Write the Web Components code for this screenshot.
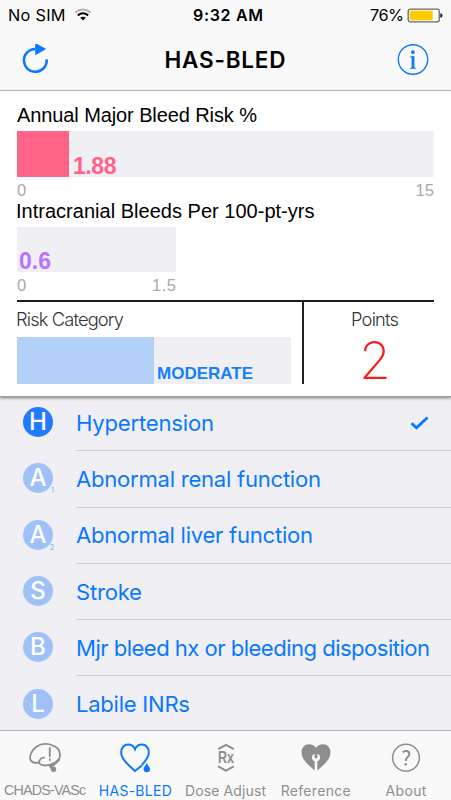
<!DOCTYPE html>
<html lang="en">
<head>
<meta charset="utf-8">
<title>HAS-BLED</title>
<style>
  html, body { margin: 0; height: 100%; background: #efeff4; }
  body { overflow: hidden; }
</style>
</head>
<body>
<bleed-app></bleed-app>

<script>
const define = (name, html, setup) => customElements.define(name, class extends HTMLElement {
  connectedCallback() {
    if (this.shadowRoot) return;
    const t = document.createElement('template');
    t.innerHTML = html;
    this.attachShadow({ mode: 'open' }).append(t.content.cloneNode(true));
    if (setup) setup(this, this.shadowRoot);
  }
});

/* Single line of text tracked so that it spans the width in its "span" attribute. */
define('ui-text', `
  <style>
    :host { display: block; white-space: nowrap; flex: none; }
    span { display: inline-block; }
  </style>
  <span><slot></slot></span>`, (el, root) => {
  const want = parseFloat(el.getAttribute('span'));
  if (!want) return;
  const s = root.querySelector('span');
  const text = root.querySelector('slot').assignedNodes({ flatten: true }).map(n => n.textContent).join('');
  const gap = (want - s.getBoundingClientRect().width) / (text.length - 1);
  s.style.letterSpacing = gap + 'px';
  s.style.marginRight = -gap + 'px';
});

define('status-bar', `
  <style>
    :host { display: grid; grid-template-columns: 1fr auto 1fr; height: 30px;
      font: 400 16.3px/30px Inter, sans-serif; color: #000; padding: 0 8px 0 8px; }
    .l, .r { display: flex; align-items: center; }
    .r { justify-content: flex-end; gap: 3px; }
    .l { gap: 8px; }
    .t { font-weight: 600; font-size: 16px; padding-left: 5px; }
    svg { display: block; }
  </style>
  <div class="l"><ui-text span="57.5">No SIM</ui-text>
    <svg width="18" height="14" viewBox="0 0 18 14" fill="none" stroke-width="2">
      <path d="M1.2 4.6Q9-1.6 16.8 4.6" stroke="#b5b5b5"/><path d="M3.8 7.4Q9 3.2 14.2 7.4" stroke="#000"/>
      <path d="M6.2 9.8Q9 7.8 11.8 9.8L9 12.6Z" fill="#000"/></svg></div>
  <ui-text class="t" span="70">9:32 AM</ui-text>
  <div class="r"><ui-text span="34">76%</ui-text>
    <svg width="36" height="15" viewBox="0 0 36 15">
      <rect x="1.2" y="1.2" width="31" height="12.6" rx="2" fill="#fff" stroke="#666" stroke-width="1.3"/>
      <rect x="2.7" y="2.7" width="23" height="9.6" fill="#fc0"/>
      <path d="M33.3 5.3Q35.5 5.3 35.5 7.5T33.3 9.7Z" fill="#222"/></svg></div>`);

define('nav-bar', `
  <style>
    :host { display: flex; align-items: center; justify-content: space-between; height: 61px;
      padding: 0 22px; border-bottom: 1px solid #bdbdc0; box-sizing: border-box; }
    ui-text { font: 600 22.5px/60px Inter, sans-serif; color: #000; padding-left: 3px; }
    svg { display: block; flex: none; }
  </style>
  <svg width="28" height="32" viewBox="0 0 28 32"><path d="M24.7 15.4A11.4 11.4 0 1 1 13.3 5" fill="none" stroke="#0a78ff" stroke-width="2.5"/><path d="M13.2 -1V11.2L24.2 4.9Z" fill="#0a78ff"/></svg>
  <ui-text span="121"><slot></slot></ui-text>
  <svg width="32" height="32" viewBox="0 0 32 32" fill="#0a78ff"><circle cx="16" cy="15.5" r="14.7" fill="none" stroke="#0a78ff" stroke-width="1.4"/>
    <circle cx="15.9" cy="8.2" r="1.9"/><path d="M12.9 12.5L17.4 12V23Q17.4 23.9 19.1 24.1V24.8H12.8V24.1Q14.6 23.9 14.6 23V14.3Q14.6 13.3 12.9 13.2Z"/></svg>`);

/* Horizontal meter: filled part, then the value at the foot of the track. */
define('risk-meter', `
  <style>
    :host { display: flex; align-items: flex-end; background: #efeff4; box-sizing: border-box; }
    i { align-self: stretch; width: var(--fill, 0px); background: var(--bar); }
    div { color: var(--ink); font: var(--face); padding-left: var(--pad, 3px); }
  </style>
  <i></i><div><slot></slot></div>`);

define('score-card', `
  <style>
    :host { display: block; box-sizing: border-box; height: 306px; padding: 8px 17px 0; background: #fff;
      border-bottom: 1px solid #999da0; box-shadow: 0 1px 3px #777; position: relative;
      font-family: "Liberation Sans", Arial, sans-serif; color: #000; }
    .h { font-size: 20px; line-height: 32px; }
    .scale { display: flex; justify-content: space-between; font-size: 16.6px; line-height: 27px; height: 18px; color: #a9a9a9; }
    .short { width: 159px; }
    .last { height: 28px; line-height: 28px; }
    .foot { display: flex; border-top: 2px solid #1b1e18; height: 82px; }
    .cat { width: 285px; border-right: 2px solid #222; }
    .thin { font: 300 18.3px/35px Inter, sans-serif; color: #333; margin-left: -1px; }
    .pts { flex: 1; display: flex; flex-direction: column; align-items: center; padding-left: 12px; }
    .pts .thin { margin: 0; }
    .two { font: 200 51.5px/46px Inter, sans-serif; color: #ff1a1a; }
  </style>
  <ui-text class="h" span="240">Annual Major Bleed Risk %</ui-text>
  <risk-meter style="height:46px;--fill:52px;--pad:4px;--bar:#ff6488;--ink:#ff6488;--face:bold 23px/22px 'Liberation Sans',sans-serif"><ui-text span="43.5">1.88</ui-text></risk-meter>
  <div class="scale"><span>0</span><span>15</span></div>
  <ui-text class="h" style="margin-left:-1px" span="298.5">Intracranial Bleeds Per 100-pt-yrs</ui-text>
  <risk-meter class="short" style="height:45px;--pad:2px;--ink:#b974ff;--face:bold 23px/22px 'Liberation Sans',sans-serif"><ui-text span="32">0.6</ui-text></risk-meter>
  <div class="scale last short"><span>0</span><ui-text span="24">1.5</ui-text></div>
  <div class="foot">
    <div class="cat"><ui-text class="thin" span="108">Risk Category</ui-text>
      <risk-meter style="width:274px;height:47px;--fill:137px;--bar:#b3d1f7;--ink:#1480ff;--face:bold 17px/20px 'Liberation Sans',sans-serif"><ui-text span="96">MODERATE</ui-text></risk-meter></div>
    <div class="pts"><ui-text class="thin" span="48">Points</ui-text><ui-text class="two">2</ui-text></div>
  </div>`);

define('factor-row', `
  <style>
    :host { display: flex; align-items: center; height: 56.3px; padding-left: 23px; box-sizing: border-box; }
    .dot { width: 30px; height: 30px; border-radius: 50%; background: #9fc1f8; color: #fff; position: relative;
      font: 500 24px/30px Inter, sans-serif; text-align: center; flex: none; margin-bottom: 2px; }
    :host([checked]) .dot { background: #217aff; }
    sub { position: absolute; right: -1px; bottom: -1px; font: 500 7px/7px Inter, sans-serif; color: #8db6f8; }
    .body { flex: 1; display: flex; align-items: center; justify-content: space-between; align-self: stretch;
      margin-left: 23px; padding: 0 22px 0 0; border-bottom: 1px solid #cfcfd4; }
    :host(:last-child) .body { border-color: transparent; }
    ui-text { font: 400 22.1px/50px Inter, sans-serif; color: #0a78ff; }
    svg { display: none; } :host([checked]) svg { display: block; }
  </style>
  <div class="dot"><span id="c"></span></div>
  <div class="body"><slot></slot>
    <svg width="19" height="15" viewBox="0 0 19 15"><path d="M1.5 8.2L6.5 12.8L17.5 2.4" fill="none" stroke="#0a78ff" stroke-width="2.8"/></svg></div>`,
  (el, root) => {
    root.getElementById('c').textContent = el.getAttribute('letter');
    const n = el.getAttribute('index');
    if (n) { const s = document.createElement('sub'); s.textContent = n; root.querySelector('.dot').append(s); }
    const t = document.createElement('ui-text');
    t.setAttribute('span', el.getAttribute('span'));
    t.textContent = el.getAttribute('label');
    root.querySelector('slot').replaceWith(t);
  });

define('tab-item', `
  <style>
    :host { flex: 1; display: flex; flex-direction: column; align-items: center; color: #8e8e8e; }
    :host([active]) { color: #0a78ff; }
    .i { height: 50px; display: flex; align-items: center; padding-top: 3px; box-sizing: border-box; }
    .t { font: 400 14px/19px Inter, sans-serif; }
  </style>
  <div class="i"><slot name="icon"></slot></div><div class="t"><slot></slot></div>`);

define('tab-bar', `
  <style>
    :host { display: flex; height: 70px; box-sizing: border-box; background: #f9f9f9; border-top: 1px solid #b4b4ba; position: relative; }
    svg { display: block; overflow: visible; }
    .n { font-family: "Liberation Sans", Arial, sans-serif; font-size: 14.3px; }
  </style>
  <tab-item><svg slot="icon" width="32" height="30" viewBox="0 0 32 30" fill="none" stroke="currentColor" stroke-width="1.8" stroke-linejoin="round" stroke-linecap="round">
    <path d="M10.2 19.2C5.6 21.2 .4 18.8 1.1 13.8C1.6 9.8 4.2 5.8 8.2 3.2C13 .2 19.5.3 23 2.3C28.5 3.2 31.5 8 30.9 13C30.5 17 28.3 19.7 24 20.5C20 22.8 14 23.2 11.2 21.2C9 18.8 11.3 14.2 15 14.6"/>
    <path d="M20.8 5V13M20.8 16.3V17" stroke-width="1.9"/><path d="M21 22.4L23 25" stroke-width="3"/><path d="M29.5 17L24.2 22" stroke-width="2.6"/><circle cx="24.5" cy="26.3" r="1.8" fill="currentColor"/></svg>
    <ui-text class="n" span="82">CHADS-VASc</ui-text></tab-item>
  <tab-item active><svg slot="icon" width="30" height="30" viewBox="0 0 30 30">
    <path d="M21.8 22.5L15 28C9 22.5 1.2 16.5 1.2 9.3C1.2 4.8 4.2 1.6 8 1.6C11.2 1.6 13.8 3.2 15 6.2C16.2 3.2 18.8 1.6 22 1.6C25.8 1.6 28.8 4.8 28.8 9.3C28.8 13.7 25.8 17.8 21.8 22" fill="none" stroke="currentColor" stroke-width="2"/>
    <path d="M26.8 19.3C27.5 22.8 30 23.6 30 26A3.2 3.2 0 0 1 23.6 26C23.6 23.6 26.1 22.8 26.8 19.3Z" fill="currentColor"/></svg>
    <ui-text span="73">HAS-BLED</ui-text></tab-item>
  <tab-item><svg slot="icon" width="18" height="30" viewBox="0 0 18 30"><path d="M1.2 6.2L9 1.8L16.8 6.2M1.2 23.4L9 27.6L16.8 23.4" fill="none" stroke="currentColor" stroke-width="2"/>
    <text x="1" y="20.3" font-family="Liberation Sans, sans-serif" font-weight="bold" font-size="16.5" textLength="16" lengthAdjust="spacingAndGlyphs" fill="currentColor">Rx</text></svg>
    <ui-text span="81">Dose Adjust</ui-text></tab-item>
  <tab-item><svg slot="icon" width="30" height="30" viewBox="0 0 30 30"><path d="M15 28.6C8 22.5.5 17 .5 9.2C.5 4.5 3.8 1.2 7.8 1.2C11.2 1.2 13.8 2.8 15 5C16.2 2.8 18.8 1.2 22.2 1.2C26.2 1.2 29.5 4.5 29.5 9.2C29.5 17 22 22.5 15 28.6Z" fill="currentColor"/>
    <path d="M13.7 28.2V18.3C11.6 17.6 10.8 15.8 11 14C11.2 12.2 12.2 11.2 13.6 10.7V14.8L15 15.7L16.4 14.8V10.7C17.8 11.2 18.8 12.2 19 14C19.2 15.8 18.4 17.6 16.3 18.3V28.2Z" fill="#f9f9f9"/></svg>
    <ui-text span="70">Reference</ui-text></tab-item>
  <tab-item><svg slot="icon" width="30" height="30" viewBox="0 0 30 30" fill="none" stroke="currentColor"><circle cx="15" cy="14.7" r="13.4" stroke-width="1.5"/>
    <path d="M11.6 9.2C13.8 7.2 18.4 7.4 18.4 11.1C18.4 14 14.7 14.4 14.7 18" stroke-width="2"/><circle cx="14.7" cy="21.3" r="1.3" fill="currentColor" stroke="none"/></svg>
    <ui-text span="41">About</ui-text></tab-item>`);

define('bleed-app', `
  <style>
    :host { display: flex; flex-direction: column; width: 451px; height: 800px; overflow: hidden; background: #efeff4; }
    header { background: #f9f9f9; }
    main { flex: 1; overflow: hidden; margin-top: -2px; min-height: 0; }
    score-card { flex: none; z-index: 1; }
  </style>
  <header><status-bar></status-bar><nav-bar>HAS-BLED</nav-bar></header>
  <score-card></score-card>
  <main>
    <factor-row checked letter="H" label="Hypertension" span="138"></factor-row>
    <factor-row letter="A" index="1" label="Abnormal renal function" span="245"></factor-row>
    <factor-row letter="A" index="2" label="Abnormal liver function" span="237"></factor-row>
    <factor-row letter="S" label="Stroke" span="66"></factor-row>
    <factor-row letter="B" label="Mjr bleed hx or bleeding disposition" span="354"></factor-row>
    <factor-row letter="L" label="Labile INRs" span="114"></factor-row>
  </main>
  <tab-bar></tab-bar>`);
</script>
</body>
</html>
